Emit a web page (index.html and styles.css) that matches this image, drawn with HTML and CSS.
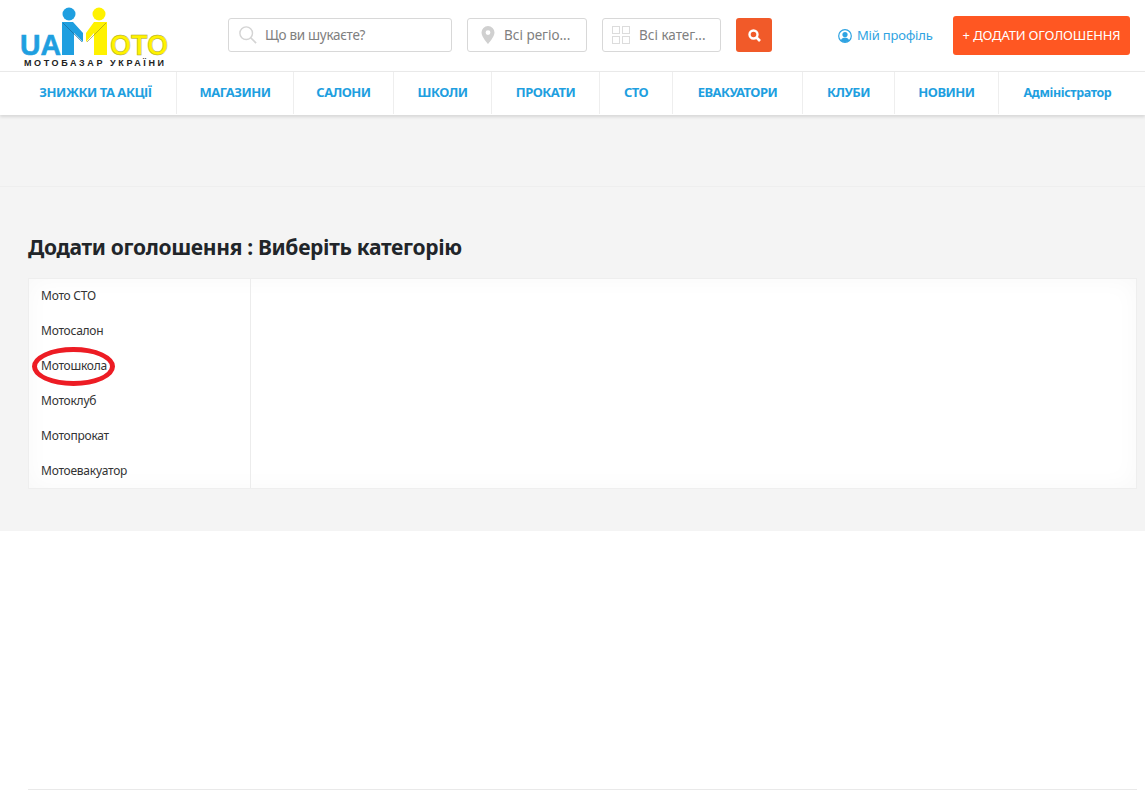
FILE: index.html
```html
<!DOCTYPE html>
<html lang="uk">
<head>
<meta charset="utf-8">
<title>UAMoto</title>
<link rel="stylesheet" href="styles.css">
</head>
<body>
<header class="top">
  <a class="logo" href="#">
    <svg width="175" height="71" viewBox="0 0 175 71">
      <circle cx="54" cy="14" r="6.5" fill="#1f9fe0"/>
      <path d="M47 22H58L68 33V42L59 33V55H47Z" fill="#1f9fe0"/>
      <path d="M48 23L67 42" stroke="#17608c" stroke-width=".6" fill="none"/>
      <circle cx="84" cy="14" r="6.5" fill="#fff200"/>
      <path d="M79 22H92V55H79V33L71 42V33Z" fill="#fff200"/>
      <path d="M91 23L72 42" stroke="#8f8a20" stroke-width=".6" fill="none"/>
      <text x="5" y="55" class="logo-ua" textLength="41" lengthAdjust="spacingAndGlyphs">UA</text>
      <text x="95" y="55" class="logo-oto" textLength="58" lengthAdjust="spacingAndGlyphs">OTO</text>
      <text x="9" y="65.500" class="logo-sub" textLength="140">МОТОБАЗАР УКРАЇНИ</text>
    </svg>
  </a>
  <div class="search-wrap">
    <label class="field field-search">
      <svg width="18" height="18" viewBox="0 0 20 20"><circle cx="8" cy="8" r="7" fill="none" stroke="#d4d4d4" stroke-width="1.600"/><path d="M13 13l6 6" stroke="#d4d4d4" stroke-width="1.800"/></svg>
      <span>Що ви шукаєте?</span>
    </label>
    <label class="field field-region">
      <svg width="14" height="18" viewBox="0 0 14 18"><path d="M7 0a6.500 6.500 0 0 0-6.500 6.500C.5 11 7 18 7 18s6.500-7 6.500-11.500A6.500 6.500 0 0 0 7 0zm0 9a2.400 2.400 0 1 1 0-4.800a2.400 2.400 0 0 1 0 4.800z" fill="#d0d0d0"/></svg>
      <span>Всі регіо...</span>
    </label>
    <label class="field field-cat">
      <svg width="18" height="18" viewBox="0 0 18 18" fill="none" stroke="#dcdcdc"><rect x=".5" y=".5" width="7" height="7"/><rect x="10.500" y=".5" width="7" height="7"/><rect x=".5" y="10.500" width="7" height="7"/><rect x="10.500" y="10.500" width="7" height="7"/></svg>
      <span>Всі катег...</span>
    </label>
    <button class="search-btn" type="button">
      <svg width="13" height="13" viewBox="0 0 13 13"><circle cx="5.500" cy="5.500" r="4" fill="none" stroke="#fff" stroke-width="2.400"/><path d="M8.500 8.500l3.500 3.500" stroke="#fff" stroke-width="2.600"/></svg>
    </button>
  </div>
  <a class="profile" href="#">
    <svg width="14" height="14" viewBox="0 0 14 14"><circle cx="7" cy="7" r="6.300" fill="none" stroke="#2ea3e2" stroke-width="1.200"/><circle cx="7" cy="5.500" r="2.600" fill="#2ea3e2"/><path d="M2.800 11.500c.8-2.200 2.400-3 4.200-3s3.400.8 4.200 3A6 6 0 0 1 7 13a6 6 0 0 1-4.200-1.500z" fill="#2ea3e2"/></svg>
    <span>Мій профіль</span>
  </a>
  <a class="add-btn" href="#">+ ДОДАТИ ОГОЛОШЕННЯ</a>
</header>
<nav class="nav">
  <a href="#">ЗНИЖКИ ТА АКЦІЇ</a>
  <a href="#">МАГАЗИНИ</a>
  <a href="#">САЛОНИ</a>
  <a href="#">ШКОЛИ</a>
  <a href="#">ПРОКАТИ</a>
  <a href="#">СТО</a>
  <a href="#">ЕВАКУАТОРИ</a>
  <a href="#">КЛУБИ</a>
  <a href="#">НОВИНИ</a>
  <a href="#" class="nav-admin">Адміністратор</a>
</nav>
<div class="banner"></div>
<main class="content">
  <h1>Додати оголошення : Виберіть категорію</h1>
  <div class="panel">
    <ul class="cats">
      <li>Мото СТО</li>
      <li>Мотосалон</li>
      <li class="marked">Мотошкола<span class="ring"></span></li>
      <li>Мотоклуб</li>
      <li>Мотопрокат</li>
      <li>Мотоевакуатор</li>
    </ul>
    <div class="sub"></div>
  </div>
</main>
<footer class="foot"><div class="foot-line"></div></footer>
</body>
</html>
```
FILE: styles.css
```css
* { box-sizing: border-box; }
html, body { margin: 0; padding: 0; }
body { background: #fff; font-family: "Noto Sans", "Open Sans", sans-serif; color: #212529; height: 790px; overflow: hidden; }
a { text-decoration: none; color: inherit; }

.top { height: 71px; display: flex; align-items: flex-start; padding-left: 15px; }
.logo { width: 213px; flex: none; height: 71px; }
.logo svg { display: block; }
.logo-ua, .logo-oto { font-family: "Liberation Sans", sans-serif; font-weight: 700; font-size: 30px; }
.logo-ua { fill: #1f9fe0; stroke: #1f9fe0; stroke-width: .6; }
.logo-oto { fill: #fff200; stroke: #a8a32e; stroke-width: .5; }
.logo-sub { font-family: "Liberation Sans", sans-serif; font-weight: 700; font-size: 9px; fill: #222; }

.search-wrap { display: flex; gap: 15px; padding-top: 18px; width: 544px; flex: none; }
.field { height: 34px; border: 1px solid #d8d8d8; border-radius: 3px; display: flex; align-items: center; font-size: 13.500px; color: #808080; background: #fff; white-space: nowrap; }
.field-search { width: 224px; padding-left: 10px; gap: 8px; letter-spacing: -.3px; }
.field-region { width: 120px; padding-left: 13px; gap: 9px; }
.field-cat { width: 119px; padding-left: 9px; gap: 9px; }
.search-btn { width: 36px; height: 34px; border: 0; border-radius: 3px; background: #f15a29; display: flex; align-items: center; justify-content: center; padding: 0; }

.profile { margin-top: 27px; margin-left: 66px; display: flex; align-items: center; gap: 5px; font-size: 13px; letter-spacing: -.2px; line-height: 17px; color: #2ea3e2; white-space: nowrap; width: 115px; flex: none; }
.add-btn { margin-top: 16px; width: 177px; height: 39px; background: #ff5722; color: #fff; border-radius: 3px; font-size: 13px; letter-spacing: -.15px; line-height: 38px; text-align: center; white-space: nowrap; flex: none; }

.nav { height: 44px; border-top: 1px solid #e9e9e9; display: grid; grid-template-columns: 177px 117px 100px 98px 108px 73px 130px 92px 104px 146px; box-shadow: 0 2px 3px rgba(0,0,0,.12); position: relative; background: #fff; padding-bottom: 1px; }
.nav a { display: flex; align-items: center; justify-content: center; border-right: 1px solid #eee; font-size: 13px; letter-spacing: -.5px; font-weight: 700; color: #1f9fe0; white-space: nowrap; padding-bottom: 2px; }
.nav a:first-child { padding-left: 15px; letter-spacing: -.45px; }
.nav .nav-admin { border-right: 0; padding-right: 9px; font-size: 12.500px; letter-spacing: -.4px; }

.banner { height: 72px; background: #f4f4f4; border-bottom: 1px solid #eee; }
.content { background: #f4f4f4; height: 344px; padding: 46px 8px 0 28px; }
.content h1 { margin: 0; font-size: 21px; letter-spacing: -.32px; line-height: 28px; font-weight: 700; color: #212529; }
.panel { margin-top: 17px; height: 211px; display: flex; background: #fff; border: 1px solid #eee; box-shadow: inset 0 0 24px rgba(0,0,0,.03); }
.cats { list-style: none; margin: 0; padding: 0; width: 222px; flex: none; border-right: 1px solid #ececec; }
.cats li { height: 35px; line-height: 33px; padding-left: 12px; font-size: 12px; letter-spacing: -.25px; color: #333; position: relative; }
.sub { flex: 1; }
.ring { position: absolute; left: 3px; top: -2px; width: 83px; height: 39px; border: 5px solid #ed1c24; border-radius: 50%; }

.foot { padding: 258px 8px 0 28px; }
.foot-line { border-top: 1px solid #e9e9e9; }
```
